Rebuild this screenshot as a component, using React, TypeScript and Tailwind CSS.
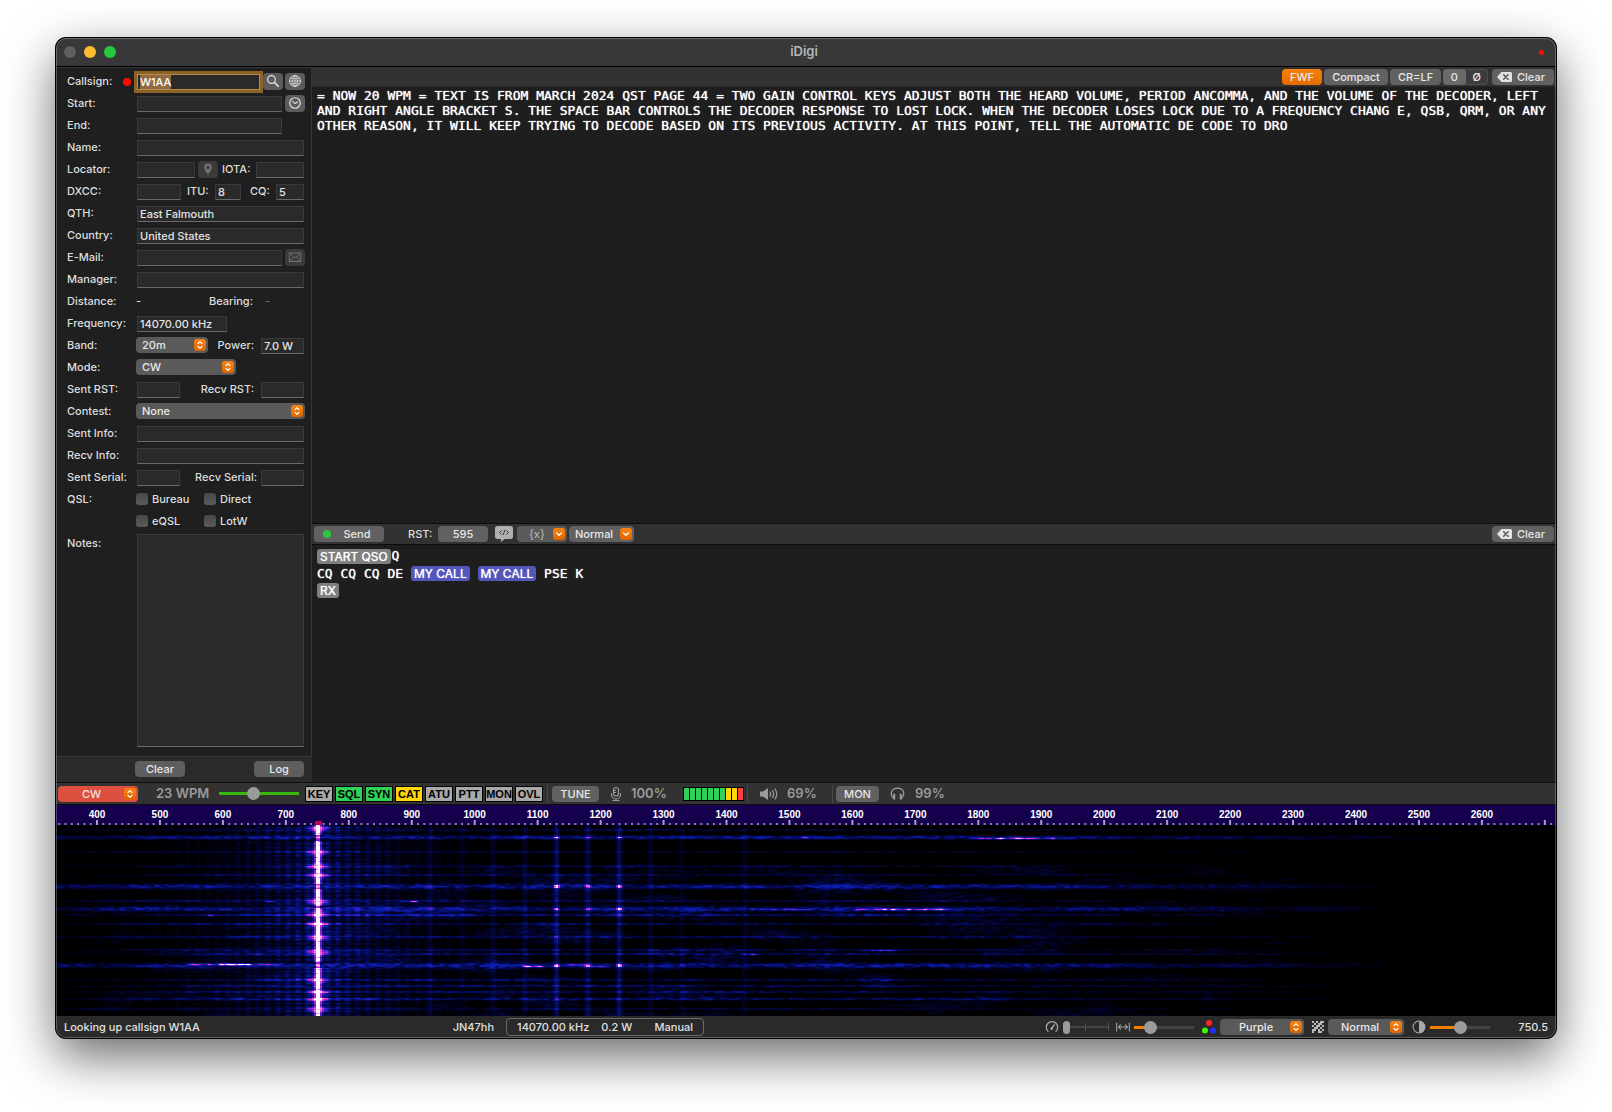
import { useEffect, useMemo, useRef, type ReactNode } from 'react';
import clsx from 'clsx';

const DECODED =
  '= NOW 20 WPM = TEXT IS FROM MARCH 2024 QST PAGE 44 = TWO GAIN CONTROL KEYS ADJUST BOTH THE HEARD VOLUME, PERIOD ANCOMMA, AND THE VOLUME OF THE DECODER, LEFT AND RIGHT ANGLE BRACKET S. THE SPACE BAR CONTROLS THE DECODER RESPONSE TO LOST LOCK. WHEN THE DECODER LOSES LOCK DUE TO A FREQUENCY CHANG E, QSB, QRM, OR ANY OTHER REASON, IT WILL KEEP TRYING TO DECODE BASED ON ITS PREVIOUS ACTIVITY. AT THIS POINT, TELL THE AUTOMATIC DE CODE TO DRO';

/* ---------- icons ---------- */

function Icon({ className, box = 16, children }: { className?: string; box?: number; children: ReactNode }) {
  return (
    <svg
      viewBox={`0 0 ${box} ${box}`}
      className={clsx('shrink-0', className)}
      fill="none"
      stroke="currentColor"
      strokeWidth="1.2"
      strokeLinecap="round"
      strokeLinejoin="round"
      aria-hidden="true"
    >
      {children}
    </svg>
  );
}

const SearchIcon = () => (
  <Icon className="size-[14px]">
    <circle cx="6.3" cy="6.3" r="4.4" strokeWidth="1.4" />
    <path d="M9.8 9.8 14 14" strokeWidth="2" />
  </Icon>
);

const GlobeIcon = () => (
  <Icon className="size-[14px]">
    <circle cx="8" cy="8" r="6.2" strokeWidth="1.1" />
    <ellipse cx="8" cy="8" rx="2.8" ry="6.2" strokeWidth="0.9" />
    <path d="M2 8h12M8 2v12M3.2 4.6c3 1.3 6.6 1.3 9.6 0M3.2 11.4c3-1.3 6.6-1.3 9.6 0" strokeWidth="0.8" />
  </Icon>
);

const ClockIcon = () => (
  <Icon className="size-[14px]">
    <circle cx="8" cy="8" r="6" strokeWidth="1.4" />
    <path d="M5.2 6.2 8 8.6l3-1.8" />
  </Icon>
);

const PinIcon = () => (
  <Icon className="size-[14px]">
    <path
      d="M8 1.6a4.5 4.5 0 0 0-4.5 4.6C3.5 9 6.5 11.3 8 14.6 9.5 11.3 12.5 9 12.5 6.2A4.5 4.5 0 0 0 8 1.6zM8 4.4a1.8 1.8 0 1 1 0 3.600 1.8 1.8 0 0 1 0-3.600z"
      fill="currentColor"
      fillRule="evenodd"
      stroke="none"
    />
  </Icon>
);

const MailIcon = () => (
  <Icon className="size-[14px]">
    <rect x="1.5" y="3.5" width="13" height="9.5" />
    <path d="m1.8 3.8 6.2 5.4 6.2-5.4M1.8 12.7l4.4-4.8M14.2 12.7 9.8 7.9" strokeWidth="1" />
  </Icon>
);

const BackspaceIcon = () => (
  <svg viewBox="0 0 15 10" className="h-[10px] w-[15px] shrink-0" aria-hidden="true">
    <path d="M4.5 0H13.5Q15 0 15 1.5V8.5Q15 10 13.5 10H4.5L0 5z" fill="#e3e3e3" />
    <path d="m6.7 2.8 4.4 4.4m0-4.4L6.7 7.2" stroke="#555" strokeWidth="1.5" strokeLinecap="round" />
  </svg>
);

const BubbleIcon = () => (
  <svg viewBox="0 0 18 16" className="h-4 w-[18px] shrink-0" aria-hidden="true">
    <path d="M2.5 0h13Q18 0 18 2.5v8Q18 13 15.5 13H9.5L6 16V13H2.5Q0 13 0 10.5v-8Q0 0 2.5 0z" fill="#b0b0b0" />
    <path d="M6.5 4.5 4.5 6.5l2 2M11.5 4.5l2 2-2 2M9.700 4 8.300 9" stroke="#333" strokeWidth="1" fill="none" />
  </svg>
);

const MicIcon = () => (
  <Icon className="size-4">
    <rect x="5.5" y="1.5" width="5" height="8.5" rx="2.5" />
    <path d="M3.5 7.5v1a4.5 4.5 0 0 0 9 0v-1M8 13v1.5M5 14.5h6M6 4.5h1.5M6 6.5h1.5" />
  </Icon>
);

const SpeakerIcon = () => (
  <svg viewBox="0 0 18 14" className="h-[14px] w-[18px] shrink-0" fill="none" stroke="currentColor" strokeWidth="1.3" strokeLinecap="round" aria-hidden="true">
    <path d="M0 4.5h3L8 1v12L3 9.5H0z" fill="currentColor" stroke="none" />
    <path d="M10 5q1.3 2 0 4M12.5 3.5q2.3 3.5 0 7M15 2q3.5 5 0 10" />
  </svg>
);

const HeadphonesIcon = () => (
  <Icon className="size-[15px]">
    <path d="M3.5 13C-.5 8.5 1.5 2.2 8 2.2S16.5 8.5 12.5 13" strokeWidth="1.4" />
    <path d="M4.5 9v4.5M11.5 9v4.5" strokeWidth="2.2" />
  </Icon>
);

const GaugeIcon = () => (
  <Icon className="size-[14px]">
    <path d="M3.5 13A6.5 6.5 0 1 1 12.5 13" strokeWidth="1.4" />
    <path d="M7.5 10 10.5 5.5" strokeWidth="1.6" />
    <circle cx="7.5" cy="10" r="1.4" fill="currentColor" stroke="none" />
  </Icon>
);

const WidthIcon = () => (
  <Icon className="size-[14px]">
    <path d="M.8 3.5v9M15.2 3.5v9M2.8 8h10.4M5.3 5.5 2.8 8l2.5 2.5M10.7 5.5 13.2 8l-2.5 2.5" />
  </Icon>
);

const RgbIcon = () => (
  <svg viewBox="0 0 14 14" className="size-[14px] shrink-0" aria-hidden="true">
    <circle cx="7" cy="3" r="3" fill="#ff2626" />
    <circle cx="3" cy="10.5" r="3" fill="#3df505" />
    <circle cx="11" cy="10.5" r="3" fill="#2230ff" />
  </svg>
);

const CheckerIcon = () => (
  <svg viewBox="0 0 12 12" className="size-3 shrink-0" fill="#b8b8b8" aria-hidden="true">
    {['101011', '010110', '101101', '011010', '110101', '100110'].flatMap((row, r) =>
      [...row].map((cell, c) => cell === '1' && <rect key={`${c}-${r}`} x={c * 2} y={r * 2} width="2" height="2" />),
    )}
  </svg>
);

const ContrastIcon = () => (
  <Icon className="size-[14px]">
    <circle cx="8" cy="8" r="6.8" />
    <path d="M8 1.2a6.8 6.8 0 0 1 0 13.6z" fill="currentColor" stroke="none" />
  </Icon>
);

/* ---------- controls ---------- */

function Field({ label, className, value = '' }: { label: string; className?: string; value?: string }) {
  return (
    <input
      aria-label={label}
      defaultValue={value}
      className={clsx(
        'mx-px h-4 min-w-0 border border-[#3a3a3a] border-b-[#6a6a6a] bg-[#2a2a2a] px-[2px] text-[11px] text-[#e2e2e2] outline-none',
        className,
      )}
    />
  );
}

function IconButton({ label, dim, children }: { label: string; dim?: boolean; children: ReactNode }) {
  return (
    <button
      aria-label={label}
      className={clsx(
        'mb-[2px] flex h-[17px] w-5 shrink-0 items-center justify-center rounded-[4px]',
        dim ? 'bg-[#3a3a3a] text-[#717171]' : 'bg-[#5c5c5c] text-[#e3e3e3]',
      )}
    >
      {children}
    </button>
  );
}

function Push({ className, children }: { className?: string; children: ReactNode }) {
  return (
    <button
      className={clsx(
        'flex h-4 shrink-0 items-center justify-center rounded-[4px] text-[11px] leading-4 text-[#e8e8e8]',
        className,
      )}
    >
      {children}
    </button>
  );
}

function Select({
  label,
  value,
  className,
  tone = 'bg-[#5a5a5a] text-[#e8e8e8]',
  align = 'pl-[6px]',
  down,
}: {
  label: string;
  value: string;
  className?: string;
  tone?: string;
  align?: string;
  down?: boolean;
}) {
  return (
    <div className={clsx('relative h-4 shrink-0', className)}>
      <select
        aria-label={label}
        className={clsx('block h-4 w-full appearance-none rounded-[4px] text-[11px] leading-4 outline-none', tone, align)}
      >
        <option>{value}</option>
      </select>
      <span className="pointer-events-none absolute top-[2px] right-[2px] flex size-3 items-center justify-center rounded-[3px] bg-gradient-to-b from-[#f98412] to-[#dd6500]">
        <svg viewBox="0 0 12 12" className="size-3" fill="none" stroke="#fff" strokeWidth="1.3" strokeLinecap="round" strokeLinejoin="round" aria-hidden="true">
          <path d={down ? 'M3.5 5 6 7.3 8.5 5' : 'M4 4.6 6 2.6l2 2M4 7.4l2 2 2-2'} />
        </svg>
      </span>
    </div>
  );
}

function Range({ label, value, className }: { label: string; value: number; className: string }) {
  return (
    <input
      type="range"
      aria-label={label}
      defaultValue={value}
      className={clsx(
        'h-[14px] shrink-0 appearance-none bg-[length:100%_3px] bg-center bg-no-repeat outline-none [&::-webkit-slider-thumb]:appearance-none [&::-webkit-slider-thumb]:rounded-full [&::-webkit-slider-thumb]:bg-[#9b9b9b]',
        className,
      )}
    />
  );
}

function Row({ label, children }: { label: string; children?: ReactNode }) {
  return (
    <div className="flex h-[22px] items-center">
      <span className="w-[69px] shrink-0 pb-[2px]">{label}</span>
      <div className="flex min-w-0 flex-1 items-center gap-[2px]">{children}</div>
    </div>
  );
}

// secondary label inside a row, sits on the same line as the first one
function Sub({ className, children }: { className?: string; children: ReactNode }) {
  return <span className={clsx('pb-[2px]', className)}>{children}</span>;
}

function Check({ label }: { label: string }) {
  return (
    <label className="flex w-[66px] items-center gap-1 pb-[2px]">
      <input type="checkbox" className="size-3 appearance-none rounded-[3px] bg-gradient-to-b from-[#474747] to-[#5c5c5c]" />
      {label}
    </label>
  );
}

function Sidebar() {
  const call = useRef<HTMLInputElement>(null);

  useEffect(() => {
    call.current?.focus();
    call.current?.select();
  }, []);

  return (
    <aside className="flex w-64 shrink-0 flex-col text-[11px] text-[#dedede]">
      <form className="flex flex-1 flex-col border-t border-r border-b border-[#363636] bg-[#1f1f1f] pt-[3px] pr-[6px] pb-[9px] pl-[11px]">
        <div className="flex h-[22px] items-center">
          <label htmlFor="callsign" className="w-[56px] pb-[2px]">Callsign:</label>
          <span className="size-2 rounded-full bg-[#fb0d00]" />
          <input
            id="callsign"
            ref={call}
            defaultValue="W1AA"
            className="mr-[3px] ml-[6px] h-4 min-w-0 flex-1 border border-[#b98a45] bg-[#2a2a2a] px-[2px] text-[11px] text-white ring-3 ring-[#8b6327] outline-none selection:bg-[#8f6a44] selection:text-white"
          />
          <div className="flex gap-[2px]">
            <IconButton label="Search"><SearchIcon /></IconButton>
            <IconButton label="Web"><GlobeIcon /></IconButton>
          </div>
        </div>
        <Row label="Start:">
          <Field label="Start" className="flex-1" />
          <IconButton label="Now"><ClockIcon /></IconButton>
        </Row>
        <Row label="End:">
          <Field label="End" className="flex-1" />
          <span className="w-5" />
        </Row>
        <Row label="Name:"><Field label="Name" className="flex-1" /></Row>
        <Row label="Locator:">
          <Field label="Locator" className="w-[58px]" />
          <IconButton label="Map" dim><PinIcon /></IconButton>
          <Sub className="ml-[2px]">IOTA:</Sub>
          <Field label="IOTA" className="ml-auto w-12" />
        </Row>
        <Row label="DXCC:">
          <Field label="DXCC" className="w-11" />
          <Sub className="ml-[3px] w-[25px]">ITU:</Sub>
          <Field label="ITU" className="w-[26px]" value="8" />
          <Sub className="ml-auto w-[23px]">CQ:</Sub>
          <Field label="CQ" className="w-7" value="5" />
        </Row>
        <Row label="QTH:"><Field label="QTH" className="flex-1" value="East Falmouth" /></Row>
        <Row label="Country:"><Field label="Country" className="flex-1" value="United States" /></Row>
        <Row label="E-Mail:">
          <Field label="E-Mail" className="flex-1" />
          <IconButton label="Write" dim><MailIcon /></IconButton>
        </Row>
        <Row label="Manager:"><Field label="Manager" className="flex-1" /></Row>
        <Row label="Distance:">
          <Sub className="w-[71px]">-</Sub>
          <Sub className="w-[54px]">Bearing:</Sub>
          <Sub className="text-[#6a6a6a]">-</Sub>
        </Row>
        <Row label="Frequency:"><Field label="Frequency" className="w-[90px]" value="14070.00 kHz" /></Row>
        <Row label="Band:">
          <Select label="Band" value="20m" className="mb-[2px] w-[72px]" />
          <Sub className="ml-auto pr-1">Power:</Sub>
          <Field label="Power" className="w-[43px]" value="7.0 W" />
        </Row>
        <Row label="Mode:"><Select label="Mode" value="CW" className="mb-[2px] w-[100px]" /></Row>
        <Row label="Sent RST:">
          <Field label="Sent RST" className="w-[43px]" />
          <Sub className="ml-auto pr-1">Recv RST:</Sub>
          <Field label="Recv RST" className="w-[43px]" />
        </Row>
        <Row label="Contest:"><Select label="Contest" value="None" className="mb-[2px] flex-1" /></Row>
        <Row label="Sent Info:"><Field label="Sent Info" className="flex-1" /></Row>
        <Row label="Recv Info:"><Field label="Recv Info" className="flex-1" /></Row>
        <Row label="Sent Serial:">
          <Field label="Sent Serial" className="w-[43px]" />
          <Sub className="ml-auto pr-px">Recv Serial:</Sub>
          <Field label="Recv Serial" className="w-[43px]" />
        </Row>
        <Row label="QSL:"><Check label="Bureau" /><Check label="Direct" /></Row>
        <Row label=""><Check label="eQSL" /><Check label="LotW" /></Row>
        <div className="flex flex-1 pt-px">
          <label htmlFor="notes" className="w-[69px] pt-px">Notes:</label>
          <textarea
            id="notes"
            className="mx-px min-w-0 flex-1 resize-none border border-[#3a3a3a] border-b-[#6a6a6a] bg-[#2a2a2a] outline-none"
          />
        </div>
      </form>
      <div className="flex h-[25px] items-center justify-between bg-[#2a2a2a] pr-2 pb-px pl-[79px]">
        <Push className="w-[50px] bg-[#5e5e5e]">Clear</Push>
        <Push className="w-[50px] bg-[#5e5e5e]">Log</Push>
      </div>
    </aside>
  );
}

function Chip({ tone, children }: { tone: string; children: ReactNode }) {
  return (
    <span className={clsx("inline-block rounded-[3px] px-[3px] font-['Inter',sans-serif] text-[12px] leading-[15px]", tone)}>
      {children}
    </span>
  );
}

function Receive() {
  return (
    <section className="flex min-h-0 flex-[456] flex-col">
      <div className="flex h-5 items-center justify-end gap-[2px] border-b border-[#282828] bg-[#323232] pr-[2px]">
        <Push className="w-10 bg-gradient-to-b from-[#f98008] to-[#e26b00]">FWF</Push>
        <Push className="w-16 bg-[#616161]">Compact</Push>
        <Push className="w-[51px] bg-[#616161]">CR=LF</Push>
        <div className="mr-[2px] flex w-[45px] rounded-[4px] bg-[#3c3c3c] ring-1 ring-[#4c4c4c] ring-inset">
          <Push className="flex-1 bg-[#6a6a6a]">0</Push>
          <Push className="flex-1">Ø</Push>
        </div>
        <Push className="w-[62px] gap-[5px] bg-[#616161] pr-1"><BackspaceIcon />Clear</Push>
      </div>
      <p className="px-[5px] py-px font-['DejaVu_Sans_Mono',monospace] text-[13px] leading-[15px] font-normal text-white [text-shadow:0_0_1px_#fff]">
        {DECODED}
      </p>
    </section>
  );
}

function Transmit() {
  return (
    <section className="flex min-h-0 flex-[259] flex-col">
      <div className="flex h-[22px] items-center border-y border-[#0d0d0d] bg-[#323232] pr-[2px] pl-[2px] text-[11px] text-[#dedede]">
        <Push className="mr-6 w-[70px] bg-[#616161]">
          <span className="mr-[13px] size-2 rounded-full bg-[#28c840]" />
          <span className="pr-[5px]">Send</span>
        </Push>
        <span className="w-[30px]">RST:</span>
        <Push className="mr-[7px] w-[50px] bg-[#616161]">595</Push>
        <button aria-label="Macros" className="mr-1"><BubbleIcon /></button>
        <Select label="Variable" value="{x}" className="mr-[2px] w-[50px]" align="pl-3" tone="bg-[#5a5a5a] text-[#b0b0b0]" down />
        <Select label="Mode" value="Normal" className="w-[65px]" align="pl-[6px]" tone="bg-[#616161] text-[#e8e8e8]" down />
        <Push className="ml-auto w-[62px] gap-[5px] bg-[#616161] pr-1"><BackspaceIcon />Clear</Push>
      </div>
      <div className="px-[5px] pt-[2px] font-['DejaVu_Sans_Mono',monospace] text-[13px] leading-[18px] font-normal whitespace-pre text-white [text-shadow:0_0_1px_#fff]">
        <p className="flex items-center gap-px"><Chip tone="bg-[#7f7f7f]">START QSO</Chip>Q</p>
        <p>CQ CQ CQ DE <Chip tone="bg-[#5356ba]">MY CALL</Chip> <Chip tone="bg-[#5356ba]">MY CALL</Chip> PSE K</p>
        <p className="flex items-center"><Chip tone="bg-[#7f7f7f]">RX</Chip></p>
      </div>
    </section>
  );
}

const FLAGS = [
  { name: 'KEY', tone: 'bg-[#a9a9a9]' },
  { name: 'SQL', tone: 'bg-[#30d158]' },
  { name: 'SYN', tone: 'bg-[#30d158]' },
  { name: 'CAT', tone: 'bg-[#ffd60a]' },
  { name: 'ATU', tone: 'bg-[#a9a9a9]' },
  { name: 'PTT', tone: 'bg-[#a9a9a9]' },
  { name: 'MON', tone: 'bg-[#a9a9a9]' },
  { name: 'OVL', tone: 'bg-[#a9a9a9]' },
];

const METER = [
  'bg-[#30d158]', 'bg-[#30d158]', 'bg-[#30d158]', 'bg-[#30d158]', 'bg-[#30d158]',
  'bg-[#30d158]', 'bg-[#30d158]', 'bg-[#ffd60a]', 'bg-[#ffd60a]', 'bg-[#ff4141]',
];

function ModeBar() {
  return (
    <div className="flex h-[23px] items-center border-y border-[#0d0d0d] bg-[#323232] pl-[2px] text-[13px] font-semibold text-[#9a9a9a]">
      <Select label="Mode" value="CW" className="w-20" tone="bg-[#dd5040] text-[#f0e0dd] font-medium" align="pl-6" />
      <span className="ml-[18px] w-[63px]">23 WPM</span>
      <Range
        label="Speed"
        value={42}
        className="mr-[6px] w-20 bg-[linear-gradient(#35b80a,#35b80a)] [&::-webkit-slider-thumb]:size-[13px]"
      />
      <div className="flex gap-[2px]">
        {FLAGS.map(f => (
          <span
            key={f.name}
            className={clsx(
              "flex h-4 w-7 items-center justify-center border border-black font-['Liberation_Sans',sans-serif] text-[11px] leading-3 font-bold text-black",
              f.tone,
            )}
          >
            {f.name}
          </span>
        ))}
      </div>
      <span className="mr-1 ml-1 h-[18px] w-px bg-[#484848]" />
      <Push className="w-[47px] bg-[#616161] font-medium">TUNE</Push>
      <span className="ml-[9px]"><MicIcon /></span>
      <span className="ml-[7px] w-[52px]">100%</span>
      <div className="flex h-[14px] w-[61px] gap-px bg-black p-px">
        {METER.map((tone, i) => (
          <span key={i} className={clsx('flex-1', tone)} />
        ))}
      </div>
      <span className="mr-3 ml-[3px] h-[18px] w-px bg-[#484848]" />
      <SpeakerIcon />
      <span className="ml-[9px] w-[45px]">69%</span>
      <span className="mr-[3px] h-[18px] w-px bg-[#484848]" />
      <Push className="mr-[11px] w-[43px] bg-[#616161] font-medium">MON</Push>
      <HeadphonesIcon />
      <span className="ml-[10px]">99%</span>
    </div>
  );
}

/* ---------- waterfall ---------- */

const W = 1500;
const H = 191;
const CARRIER = 262;

const hzToX = (hz: number) => 41 + (hz - 400) * 0.6295;

// y, half height, strength, left fade, right end
const BANDS = [
  [5, 1, 0.18, 40, 1230],
  [12.5, 1.9, 0.4, 0, 1410],
  [27, 1, 0.16, 120, 1270],
  [41, 1, 0.18, 220, 1220],
  [50, 1, 0.2, 200, 1250],
  [61.5, 2.3, 0.42, 0, 1340],
  [76, 1, 0.22, 60, 1250],
  [84, 2.4, 0.4, 90, 1340],
  [90, 1.1, 0.28, 140, 1260],
  [99, 1, 0.27, 180, 1220],
  [112, 1, 0.26, 140, 1290],
  [125, 1, 0.24, 180, 1270],
  [129, 1, 0.28, 200, 1330],
  [140.5, 2.4, 0.42, 0, 1350],
  [155, 1.2, 0.24, 180, 1280],
  [161, 1, 0.28, 180, 1310],
  [167, 1, 0.26, 160, 1300],
  [174, 1.3, 0.28, 160, 1310],
  [184, 1, 0.16, 40, 1230],
];

// x from, x to, y, strength
const SPOTS = [
  [910, 1020, 13, 0.85],
  [690, 760, 84, 0.4],
  [795, 900, 84, 0.8],
  [130, 228, 139, 0.85],
  [70, 130, 141, 0.15],
  [465, 490, 141, 0.8],
  [508, 530, 139, 0.5],
  [530, 555, 141, 0.4],
  [206, 220, 76, 0.6],
  [343, 362, 76, 0.75],
  [800, 846, 125, 0.5],
  [684, 702, 129, 0.4],
  [120, 200, 84, 0.2],
  [150, 158, 90, 0.5],
  [744, 760, 12, 0.35],
];

const LINES: [number, number][] = [
  [930, 0.1], [980, 0.06], [1030, 0.09], [1080, 0.11], [1130, 0.26],
  [1180, 0.2], [1230, 0.25], [1280, 0.08], [1330, 0.05], [1430, 0.07],
];

const BURSTS = [3, 27, 41, 50, 76, 89, 99, 112, 127, 155, 167, 174, 184];
const GAPS = [[10, 15], [59, 63], [81, 82], [137, 142]];

const hash = (x: number, y: number) => {
  let n = Math.imul(x, 374761393) + Math.imul(y, 668265263);
  n = Math.imul(n ^ (n >>> 13), 1274126177);
  return ((n ^ (n >>> 16)) >>> 0) / 4294967295;
};

const noise = (x: number, y: number) => {
  const xi = Math.floor(x);
  const yi = Math.floor(y);
  const u = x - xi;
  const v = y - yi;
  const a = hash(xi, yi) * (1 - u) + hash(xi + 1, yi) * u;
  const b = hash(xi, yi + 1) * (1 - u) + hash(xi + 1, yi + 1) * u;
  return a * (1 - v) + b * v;
};

const clamp = (v: number) => Math.max(0, Math.min(1, v));

function power(x: number, y: number) {
  const grain = noise(x / 5, y / 1.3);
  let v = 0;
  let onBand = 0;
  for (const [by, h, amp, from, to] of BANDS) {
    const d = (y + 0.5 - by) / h;
    if (Math.abs(d) > 2.2) continue;
    const g = Math.exp(-d * d);
    const left = from ? clamp((x + 40) / (from + 40)) : 0.7 + 0.3 * clamp(x / 120);
    const right = clamp((to - x) / 500) ** 0.8;
    const slow = 0.5 + 0.7 * noise(x / 45, by);
    v += amp * g * (0.2 + 1.1 * grain) * slow * left * right;
    onBand = Math.max(onBand, g * amp);
  }

  // diffuse smudges between the bands
  const patch = clamp((noise(x / 55 + 9, y / 9 + 4) - 0.5) * 3);
  if (y > 40) v += patch * 0.16 * grain * clamp((1330 - x) / 500) * clamp(x / 250);
  v = Math.min(v, 0.38);

  for (const [x0, x1, sy, amp] of SPOTS) {
    if (x < x0 || x > x1 || Math.abs(y - sy) > 1) continue;
    const edge = Math.sin((Math.PI * (x - x0)) / (x1 - x0));
    v += amp * edge ** 0.6 * (y === sy ? 1 : 0.3) * (0.2 + 0.95 * noise(x / 4, sy + 70));
  }

  for (const [hz, amp] of LINES) {
    const d = Math.abs(x + 1 - hzToX(hz));
    const hot = onBand > 0.31 && amp > 0.15 ? 2.4 : onBand * 1.4;
    if (d < 4) v += amp * (1 - d / 4) * (0.85 + hot);
  }

  const d = Math.abs(x + 1 - CARRIER);
  const gap = GAPS.some(([a, b]) => y >= a && y <= b);
  const burst = Math.max(...BURSTS.map(b => Math.exp(-(((y - b) / 2.5) ** 2))));
  const lobes = 0.5 + 0.5 * Math.cos((d * Math.PI) / 5);
  const halo = Math.exp(-d / 55) * (0.35 + 0.65 * lobes) * (0.5 + 0.7 * noise(x / 6, y / 2 + 30));
  if (gap) return v + halo * 0.15 + (d <= 1 ? 0.45 : 0);
  if (d <= 2) v += 0.72 + 0.35 * noise(x, y / 2);
  else v += (0.46 + 0.2 * burst) * Math.exp(-(((d - 2) / (2.6 + burst * 4)) ** 2));
  return v + halo * (y % 4 === 0 ? 0.12 : 0.34 + burst * 0.12);
}

const STOPS: [number, number[]][] = [
  [0, [0, 0, 0]],
  [0.12, [2, 4, 56]],
  [0.38, [10, 28, 172]],
  [0.52, [80, 32, 205]],
  [0.7, [215, 40, 210]],
  [0.88, [255, 140, 225]],
  [1, [255, 250, 255]],
];

const shade = (t: number) => {
  const i = Math.max(1, STOPS.findIndex(([p]) => p >= t));
  const [p0, c0] = STOPS[i - 1];
  const [p1, c1] = STOPS[i];
  const k = (t - p0) / (p1 - p0);
  return `rgb(${c0.map((c, n) => Math.round(c + (c1[n] - c) * k)).join(',')})`;
};

const LEVELS = 24;

function Waterfall() {
  const paths = useMemo(() => {
    const out: string[] = Array(LEVELS + 1).fill('');
    for (let y = 0; y < H; y++) {
      let start = 0;
      let level = -1;
      for (let x = 0; x <= W; x += 2) {
        const next = x < W ? Math.round(clamp(power(x, y)) * LEVELS) : -1;
        if (next === level) continue;
        if (level > 0) out[level] += `M${start} ${y}h${x - start}v1h${start - x}z`;
        start = x;
        level = next;
      }
    }
    return out;
  }, []);

  return (
    <svg viewBox={`0 0 ${W} ${H}`} preserveAspectRatio="none" className="block h-[191px] w-full bg-black" role="img" aria-label="Waterfall">
      {paths.map((d, i) => d && <path key={i} d={d} fill={shade(i / LEVELS)} />)}
    </svg>
  );
}

function Ruler() {
  const pct = (x: number) => `${(x / W) * 100}%`;
  const ticks = Array.from({ length: 238 }, (_, i) => 340 + i * 10);
  return (
    <svg className="block h-5 w-full bg-[#15004e]" role="img" aria-label="Frequency scale">
      {ticks.map(hz => {
        const major = hz % 100 === 0;
        return (
          <rect key={hz} x={pct(hzToX(hz) - 1)} y={major ? 15 : 18} width="2" height={major ? 5 : 2} fill={major ? '#a9a2c4' : '#8a80ad'} />
        );
      })}
      {ticks.filter(hz => hz % 100 === 0 && hz < 2700).map(hz => (
        <text key={hz} x={pct(hzToX(hz))} y="13" textAnchor="middle" fill="#fff" className="font-['Liberation_Sans',sans-serif] text-[10px] font-bold">
          {hz}
        </text>
      ))}
      <rect x={pct(CARRIER - 3)} y="16" width="7" height="4" fill="#c2004f" />
    </svg>
  );
}

function StatusBar() {
  return (
    <footer className="flex h-[22px] items-center bg-[#2a2a2a] pr-2 pl-2 text-[11px] text-[#e0e0e0]">
      <div className="flex flex-[11] items-center justify-between">
        <span>Looking up callsign W1AA</span>
        <span className="mr-3">JN47hh</span>
      </div>
      <div className="flex h-[18px] w-[198px] items-center rounded-[4px] border border-[#6a6a6a] px-[10px]">
        <span>14070.00 kHz</span>
        <span className="ml-3">0.2 W</span>
        <span className="ml-auto">Manual</span>
      </div>
      <div className="flex flex-[21] items-center justify-end text-[#a8a8a8]">
        <GaugeIcon />
        <Range
          label="Speed"
          value={0}
          className="mr-[7px] ml-1 w-[46px] bg-[linear-gradient(to_right,transparent_22px,#555_22px,#555_23px,transparent_23px,transparent_45px,#555_45px),linear-gradient(#444,#444)] bg-[length:100%_8px,100%_2px] [&::-webkit-slider-thumb]:h-[13px] [&::-webkit-slider-thumb]:w-[7px]"
        />
        <WidthIcon />
        <Range
          label="Zoom"
          value={22}
          className="mr-2 ml-1 w-[60px] bg-[linear-gradient(to_right,#f77f00_28%,#444_28%)] [&::-webkit-slider-thumb]:size-[13px]"
        />
        <RgbIcon />
        <Select label="Palette" value="Purple" className="mr-2 ml-1 w-[84px]" align="pl-[19px]" />
        <CheckerIcon />
        <Select label="Filter" value="Normal" className="mr-2 ml-1 w-19" align="pl-[13px]" />
        <ContrastIcon />
        <Range
          label="Contrast"
          value={50}
          className="ml-1 w-[60px] bg-[linear-gradient(to_right,#f77f00_50%,#444_50%)] [&::-webkit-slider-thumb]:size-[13px]"
        />
        <span className="w-[58px] text-right text-[#e0e0e0]">750.5</span>
      </div>
    </footer>
  );
}

export default function App() {
  return (
    <div className="flex min-h-screen flex-col bg-white px-14 pt-[38px] pb-[74px] font-['Inter',sans-serif] font-medium">
      <div className="relative flex flex-1 flex-col overflow-hidden rounded-[10px] bg-[#1e1e1e] shadow-[0_0_0_1px_#000,0_18px_50px_rgba(0,0,0,0.6)]">
        <header className="grid h-[29px] grid-cols-[1fr_auto_1fr] items-center border-b border-black bg-[#383838] pr-3 pl-2">
          <div className="flex gap-2">
            <button aria-label="Close" className="size-3 rounded-full bg-[#5f5f5f]" />
            <button aria-label="Minimize" className="size-3 rounded-full bg-[#febc2e]" />
            <button aria-label="Zoom" className="size-3 rounded-full bg-[#28c840]" />
          </div>
          <h1 className="text-[13px] font-semibold text-[#b5b5b5]">iDigi</h1>
          <span className="ml-auto size-[5px] rounded-full bg-[#fb0d00]" />
        </header>
        <main className="flex flex-1">
          <Sidebar />
          <div className="flex min-w-0 flex-1 flex-col">
            <Receive />
            <Transmit />
          </div>
        </main>
        <ModeBar />
        <Ruler />
        <Waterfall />
        <StatusBar />
        <div className="pointer-events-none absolute inset-0 rounded-[10px] border border-white/25" />
      </div>
    </div>
  );
}
